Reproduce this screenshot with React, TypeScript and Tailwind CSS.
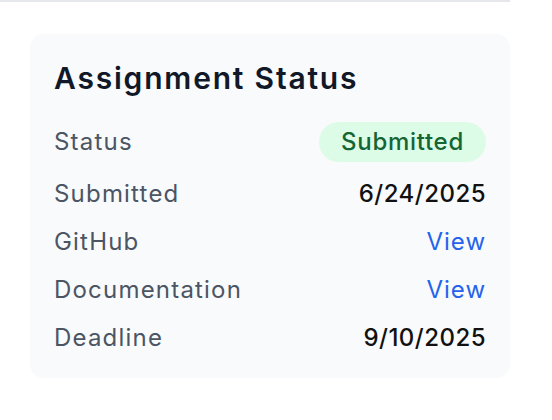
import React from "react";

export default function App() {
  const rows: { label: string; value: React.ReactNode }[] = [
    { label: "Submitted", value: <span className="font-medium text-[#111111] tracking-[0.02em]">6/24/2025</span> },
    { label: "GitHub", value: <a className="text-[#2563eb] tracking-[0.04em]">View</a> },
    { label: "Documentation", value: <a className="text-[#2563eb] tracking-[0.04em]">View</a> },
    { label: "Deadline", value: <span className="font-medium text-[#111111] tracking-[0.02em]">9/10/2025</span> },
  ];
  return (
    <div className="w-[552px] h-[420px] bg-white" style={{ fontFamily: "Inter, 'Noto Sans', sans-serif" }}>
      <div className="w-[510px] h-[2px] bg-[#e5e7eb]" />
      <div className="ml-[30px] mt-[32px] w-[480px] rounded-[14px] bg-[#f9fafb] px-[24px] pt-[24px] pb-[22px]">
        <h2 className="text-[30px] leading-[40px] font-semibold text-[#111827] mb-[24px] tracking-[0.06em]">Assignment Status</h2>
        <div className="flex flex-col gap-[12px]">
          <div className="flex items-center justify-between h-[40px] mb-[2px]">
            <span className="text-[24px] leading-[36px] text-[#4b5563] tracking-[0.05em]">Status</span>
            <span className="h-[40px] px-[22px] rounded-full bg-[#dcfce7] text-[#166534] text-[24px] font-medium tracking-[0.03em] flex items-center">Submitted</span>
          </div>
          {rows.map((r) => (
            <div key={r.label} className="flex items-center justify-between h-[36px]">
              <span className="text-[24px] leading-[36px] text-[#4b5563] tracking-[0.05em]">{r.label}</span>
              <span className="text-[24px] leading-[36px]">{r.value}</span>
            </div>
          ))}
        </div>
      </div>
    </div>
  );
}
